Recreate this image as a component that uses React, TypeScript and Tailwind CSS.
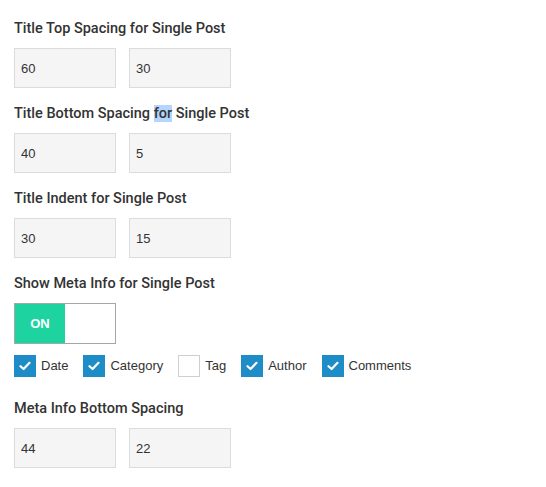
import React, { useState } from 'react';

const font = { fontFamily: '"Liberation Sans", Arial, sans-serif' };
const labelFont = { fontFamily: 'Roboto, "Liberation Sans", Arial, sans-serif' };

const SpacingField: React.FC<{ value: string }> = ({ value }) => (
  <input
    type="text"
    defaultValue={value}
    className="w-[102px] h-[40px] px-[6px] bg-[#f5f5f5] border border-[#dcdcdc] text-[13px] text-[#333] outline-none"
  />
);

const FieldLabel: React.FC<{ children: React.ReactNode }> = ({ children }) => (
  <div className="text-[14.5px] leading-[22px] font-medium mb-[8px] text-[#333]" style={labelFont}>
    {children}
  </div>
);

const Check: React.FC<{ label: string; checked: boolean }> = ({ label, checked }) => (
  <label className="flex items-center mr-[15px]">
    <span
      className={`w-[22px] h-[22px] flex items-center justify-center ${checked ? 'bg-[#1e8cc6]' : 'bg-white border border-[#cfcfcf]'}`}
    >
      {checked && (
        <svg width="12" height="10" viewBox="0 0 12 10">
          <path d="M1.5 5.2 L4.6 8 L10.5 1.8" fill="none" stroke="white" strokeWidth="2.2" strokeLinecap="round" strokeLinejoin="round" />
        </svg>
      )}
    </span>
    <span className="ml-[5px] text-[13px] text-[#333]">{label}</span>
  </label>
);

export default function App() {
  const [on, setOn] = useState(true);
  const pairs: [React.ReactNode, string, string][] = [
    ['Title Top Spacing for Single Post', '60', '30'],
    [<>Title Bottom Spacing <span className="bg-[#b4d5fe]">for</span> Single Post</>, '40', '5'],
    ['Title Indent for Single Post', '30', '15'],
  ];

  return (
    <div className="bg-white min-h-[487px] pl-[14px] pt-[18px] text-[#333]" style={font}>
      {pairs.map(([label, a, b], i) => (
        <div key={i} className="mb-[15px]">
          <FieldLabel>{label}</FieldLabel>
          <div className="flex gap-[13px]">
            <SpacingField value={a} />
            <SpacingField value={b} />
          </div>
        </div>
      ))}

      {/* Meta info toggle */}
      <FieldLabel>Show Meta Info for Single Post</FieldLabel>
      <button
        className="flex w-[102px] h-[41px] border border-[#a6a6a6] bg-white"
        onClick={() => setOn(!on)}
      >
        <span className="w-[50px] h-full bg-[#1dd39f] text-white text-[13px] font-bold flex items-center justify-center">
          {on ? 'ON' : ''}
        </span>
      </button>
      <div className="flex mt-[11px]">
        <Check label="Date" checked />
        <Check label="Category" checked />
        <Check label="Tag" checked={false} />
        <Check label="Author" checked />
        <Check label="Comments" checked />
      </div>

      <div className="mt-[21px]">
        <FieldLabel>Meta Info Bottom Spacing</FieldLabel>
        <div className="flex gap-[13px]">
          <SpacingField value="44" />
          <SpacingField value="22" />
        </div>
      </div>
    </div>
  );
}
